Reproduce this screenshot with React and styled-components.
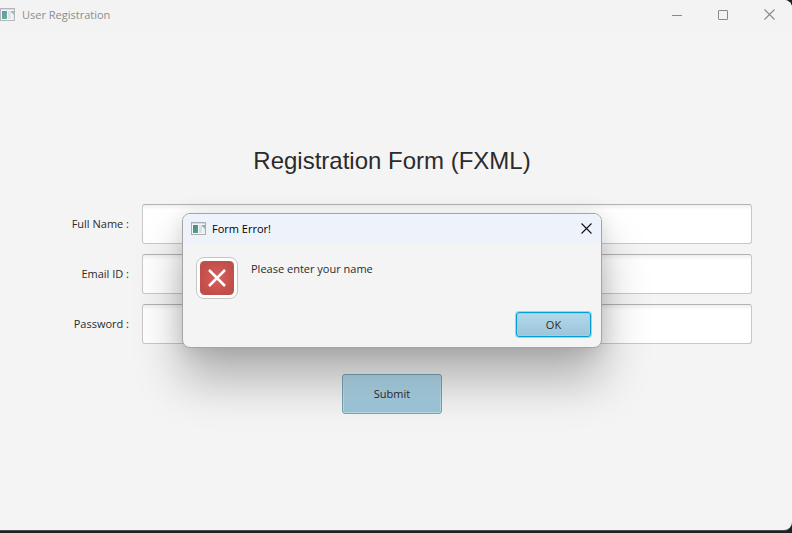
import React from "react";
import styled, { createGlobalStyle } from "styled-components";

const GlobalStyle = createGlobalStyle`
  *, *::before, *::after { box-sizing: border-box; }
  body {
    margin: 0;
    background: #1f2022;
    color: #2b2b2b;
    font-family: "Open Sans", "Noto Sans", sans-serif;
    font-size: 11px;
    line-height: 16px;
  }
`;

const Desktop = styled.div`
  display: flex;
  flex-direction: column;
  min-height: 100vh;
  padding-bottom: 3px;
`;

const Window = styled.main`
  flex: 1;
  display: flex;
  flex-direction: column;
  background: #f4f4f4;
  border-radius: 0 8px 8px 0;
  box-shadow: 0 1px 0 #4a4b4c;
`;

const TitleBar = styled.header`
  display: flex;
  align-items: center;
  height: 30px;
  padding-bottom: 1px;
  background: #f3f3f3;
  border-radius: 0 8px 0 0;
  color: #8c8c8c;
`;

const WindowTitle = styled.span`
  flex: 1;
  padding: 1px 0 0 6px;
`;

const CaptionButton = styled.button`
  display: grid;
  place-items: center;
  width: ${(p) => (p.$compact ? "30px" : "46px")};
  height: 28px;
  padding: 0;
  border: 0;
  background: transparent;
  color: ${(p) => (p.$compact ? "#111111" : "#8a8a8a")};
`;

const Content = styled.div`
  position: relative;
  flex: 1;
  display: flex;
  flex-direction: column;
  justify-content: center;
  padding: 0 40px 0 32px;
`;

const Form = styled.form`
  display: grid;
  gap: 10px;
`;

const Heading = styled.h1`
  margin: 20px 0;
  text-align: center;
  padding-top: 2px;
  font: 400 24px/26px "Liberation Sans", Arial, sans-serif;
`;

const Field = styled.div`
  display: grid;
  grid-template-columns: 100px 1fr;
  column-gap: 10px;
  align-items: center;
`;

const Label = styled.label`
  padding-right: 3px;
  text-align: right;
`;

const TextBox = styled.input`
  width: 100%;
  height: 40px;
  padding: 4px 8px;
  border: 1px solid #c8c8c8;
  border-top-color: #b2b2b2;
  border-radius: 3px;
  background: linear-gradient(#f0f0f0, #ffffff 5px);
  color: inherit;
  font: inherit;
  outline: none;
`;

const PushButton = styled.button`
  display: flex;
  align-items: center;
  justify-content: center;
  padding: 0;
  border: 1px solid #7ba2b3;
  border-radius: 3px;
  color: #2b2b2b;
  font: inherit;
`;

const SubmitButton = styled(PushButton)`
  justify-self: center;
  width: 100px;
  height: 40px;
  margin: 20px 0;
  background: linear-gradient(#b2dced, #9dc3d8);
  box-shadow: inset 0 0 0 1px #b9dbea;
`;

const OkButton = styled(PushButton)`
  width: 75px;
  height: 25px;
  border-color: #039ed3;
  background: linear-gradient(#b2d9ea, #9cc5da);
  box-shadow: 0 0 0 1px #8fdcf2, inset 0 0 0 1px #a4cde0;
  outline: none;
`;

const DialogLayer = styled.div`
  position: absolute;
  inset: 0;
  display: flex;
  align-items: center;
  justify-content: center;
  padding: 1px 40px 0 32px;
`;

const Dialog = styled.section`
  width: 420px;
  max-width: 100%;
  border: 1px solid #a5a5a5;
  border-radius: 8px;
  background: #f4f4f4;
  box-shadow: 0 32px 48px rgba(0, 0, 0, 0.28), 0 2px 20px rgba(0, 0, 0, 0.12);
  overflow: hidden;
`;

const DialogHeader = styled.header`
  display: flex;
  align-items: center;
  gap: 5px;
  height: 30px;
  padding: 0 0 1px 8px;
  background: #eef3fb;
  color: #000000;
`;

const DialogTitle = styled.h2`
  flex: 1;
  margin: 0;
  padding-top: 1px;
  font: inherit;
`;

const DialogBody = styled.div`
  display: flex;
  gap: 13px;
  padding: 13px 13px 0;
`;

const Message = styled.p`
  margin: 4px 0 0;
`;

const DialogActions = styled.footer`
  display: flex;
  justify-content: flex-end;
  padding: 13px 10px 10px;
`;

function AppIcon({ faded }) {
  return (
    <svg width="16" height="14" viewBox="0 0 16 14" opacity={faded ? 0.85 : 1} aria-hidden="true">
      <defs>
        <linearGradient id="pane" x1="0" y1="0" x2="0.6" y2="1">
          <stop offset="0" stopColor="#4f7fa6" />
          <stop offset="1" stopColor="#4fa583" />
        </linearGradient>
      </defs>
      <rect x="0.5" y="0.5" width="14" height="12" fill="#f4f6f8" stroke="#a9adb4" />
      <path d="M1 1.5h13" stroke="#d5dae2" />
      <rect x="2" y="3" width="5" height="8" fill="url(#pane)" />
      <rect x="8" y="3" width="3" height="8" fill="#dde0e3" />
      <path d="M11 3h3v4l-3-3z" fill="#83b3b0" />
      <rect x="12" y="7" width="2" height="4" fill="#e9edf0" />
    </svg>
  );
}

function CloseIcon() {
  return (
    <svg width="11" height="11" viewBox="0 0 11 11" fill="none" stroke="currentColor" aria-hidden="true">
      <path d="M.5.5l10 10M10.5.5l-10 10" strokeWidth="1.1" />
    </svg>
  );
}

function MinimizeIcon() {
  return (
    <svg width="10" height="10" viewBox="0 0 10 10" stroke="currentColor" aria-hidden="true">
      <path d="M0 5.5h10" />
    </svg>
  );
}

function MaximizeIcon() {
  return (
    <svg width="10" height="10" viewBox="0 0 10 10" fill="none" stroke="currentColor" aria-hidden="true">
      <rect x=".5" y=".5" width="9" height="9" rx=".5" />
    </svg>
  );
}

function ErrorIcon() {
  return (
    <svg width="42" height="42" viewBox="0 0 42 42" aria-hidden="true">
      <defs>
        <radialGradient id="red">
          <stop offset="0" stopColor="#dc5c5c" />
          <stop offset="1" stopColor="#c14f49" />
        </radialGradient>
      </defs>
      <rect x=".5" y=".5" width="41" height="41" rx="7.5" fill="#fff" stroke="#c6c6c6" />
      <rect x="4" y="4" width="34" height="34" rx="4.5" fill="url(#red)" />
      <path d="M13 13l16 16M29 13L13 29" stroke="#fff" strokeWidth="2.5" />
    </svg>
  );
}

const FIELDS = [
  { id: "fullName", label: "Full Name :", type: "text" },
  { id: "email", label: "Email ID :", type: "email" },
  { id: "password", label: "Password :", type: "password" },
];

export default function App() {
  return (
    <Desktop>
      <GlobalStyle />
      <Window>
        <TitleBar>
          <AppIcon faded />
          <WindowTitle>User Registration</WindowTitle>
          <CaptionButton type="button" aria-label="Minimize"><MinimizeIcon /></CaptionButton>
          <CaptionButton type="button" aria-label="Maximize"><MaximizeIcon /></CaptionButton>
          <CaptionButton type="button" aria-label="Close"><CloseIcon /></CaptionButton>
        </TitleBar>
        <Content>
          <Form onSubmit={(e) => e.preventDefault()}>
            <Heading>Registration Form (FXML)</Heading>
            {FIELDS.map((f) => (
              <Field key={f.id}>
                <Label htmlFor={f.id}>{f.label}</Label>
                <TextBox id={f.id} name={f.id} type={f.type} />
              </Field>
            ))}
            <SubmitButton type="submit">Submit</SubmitButton>
          </Form>
          <DialogLayer>
            <Dialog role="alertdialog" aria-labelledby="dialogTitle" aria-describedby="dialogMessage">
              <DialogHeader>
                <AppIcon />
                <DialogTitle id="dialogTitle">Form Error!</DialogTitle>
                <CaptionButton type="button" $compact aria-label="Close"><CloseIcon /></CaptionButton>
              </DialogHeader>
              <DialogBody>
                <ErrorIcon />
                <Message id="dialogMessage">Please enter your name</Message>
              </DialogBody>
              <DialogActions>
                <OkButton type="button">OK</OkButton>
              </DialogActions>
            </Dialog>
          </DialogLayer>
        </Content>
      </Window>
    </Desktop>
  );
}
